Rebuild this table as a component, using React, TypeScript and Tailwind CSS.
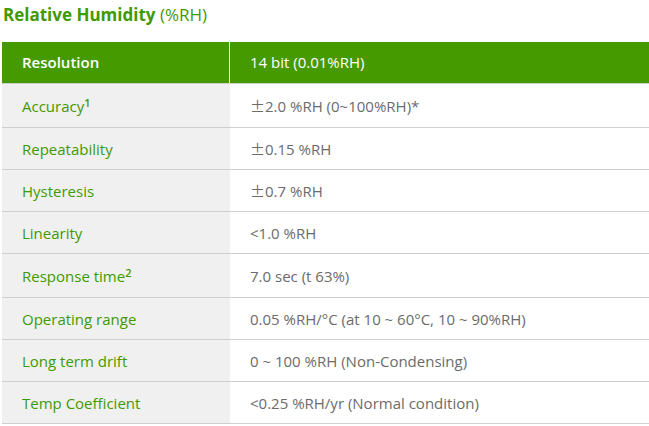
const rows: { label: string; sup?: string; value: string; pm?: boolean }[] = [
  { label: "Accuracy", sup: "1", value: "2.0 %RH (0~100%RH)*", pm: true },
  { label: "Repeatability", value: "0.15 %RH", pm: true },
  { label: "Hysteresis", value: "0.7 %RH", pm: true },
  { label: "Linearity", value: "<1.0 %RH" },
  { label: "Response time", sup: "2", value: "7.0 sec (t 63%)" },
  { label: "Operating range", value: "0.05 %RH/°C (at 10 ~ 60°C, 10 ~ 90%RH)" },
  { label: "Long term drift", value: "0 ~ 100 %RH (Non-Condensing)" },
  { label: "Temp Coefficient", value: "<0.25 %RH/yr (Normal condition)" },
];

export default function App() {
  return (
    <div className="w-[649px] h-[426px] overflow-hidden bg-white font-['Open_Sans',sans-serif]">
      <h2 className="pl-[3px] pt-[3px] text-[17px] leading-[24px] text-[#3f9a00]">
        <span className="font-bold">Relative Humidity</span> (%RH)
      </h2>

      <div className="ml-[2px] mt-[15px] w-[647px] text-[15px]">
        <div className="flex h-[42px] border-b border-[#cfcfcf] bg-[#459a00] text-white">
          <div className="flex w-[228px] items-center border-r border-white pl-[20px] font-semibold">
            Resolution
          </div>
          <div className="flex flex-1 items-center pl-[20px]">14 bit (0.01%RH)</div>
        </div>
        {rows.map((r) => (
          <div
            key={r.label}
            className={`flex border-b border-[#cfcfcf] ${r.sup ? "h-[44px]" : "h-[42px]"}`}
          >
            <div className="flex w-[228px] items-center bg-[#f0f0f0] pl-[20px] pt-[2px] text-[#3f9a00]">
              <span>
                {r.label}
                {r.sup && <sup className="text-[11px] font-semibold">{r.sup}</sup>}
              </span>
            </div>
            <div className="flex flex-1 items-center pl-[20px] pt-[2px] text-[#6b6b6b]">
              <span>
                {r.pm && <span className="font-['Noto_Sans_CJK_KR',sans-serif]">±</span>}
                {r.value}
              </span>
            </div>
          </div>
        ))}
      </div>
    </div>
  );
}
